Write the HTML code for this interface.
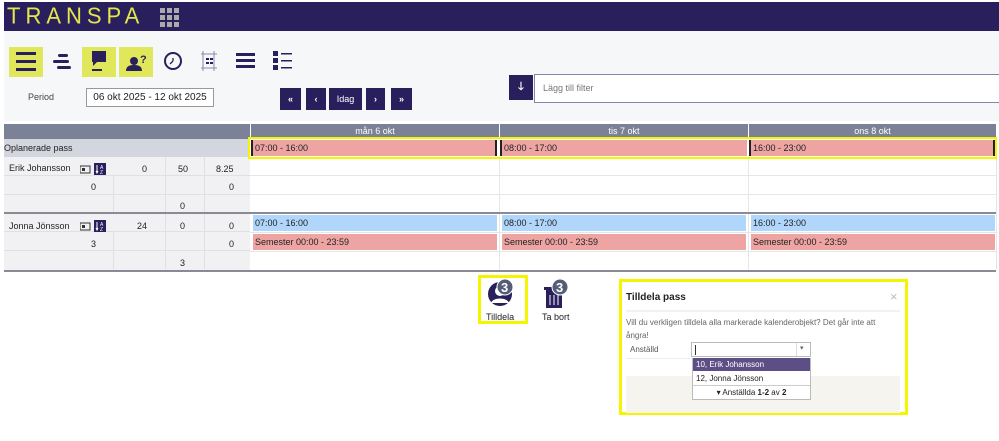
<!DOCTYPE html>
<html><head><meta charset="utf-8"><style>
*{box-sizing:border-box;margin:0;padding:0}
body{width:999px;height:441px;background:#fff;font-family:"Liberation Sans",sans-serif;font-size:9px;color:#222;position:relative;overflow:hidden}
.a{position:absolute}
.top{left:4px;top:2px;width:995px;height:29px;background:#291f5c}
.logo{left:7px;top:4px;color:#e3e84a;font-size:22px;letter-spacing:5px;line-height:24px;font-weight:normal;transform:scaleY(1.05)}
.tb{left:4px;top:31px;width:995px;height:90px;background:#f6f7f9}
.yb{background:#e1e75a}
.nav{background:#291f5c;color:#fff;font-size:9px;text-align:center;line-height:22px;height:22px;top:88px;font-weight:bold}
.hdr{background:#7b8196;color:#fff;text-align:center;line-height:15px;top:124px;height:15px}
.sh{height:16px;line-height:16px;padding-left:2px;font-size:9px;color:#222}
.red{background:#eda4a3}
.blue{background:#b1d6fb}
</style></head><body>
<div class="a top"></div>
<div class="a logo">TRANSPA</div>
<svg class="a" style="left:160px;top:8px" width="20" height="20"><g fill="#aaa"><rect x="0" y="0" width="5" height="5"/><rect x="7" y="0" width="5" height="5"/><rect x="14" y="0" width="5" height="5"/><rect x="0" y="7" width="5" height="5"/><rect x="7" y="7" width="5" height="5"/><rect x="14" y="7" width="5" height="5"/><rect x="0" y="14" width="5" height="5"/><rect x="7" y="14" width="5" height="5"/><rect x="14" y="14" width="5" height="5"/></g></svg>
<div class="a tb"></div>
<div class="a yb" style="left:9px;top:47px;width:34px;height:30px"></div>
<div class="a yb" style="left:82px;top:47px;width:34px;height:30px"></div>
<div class="a yb" style="left:119px;top:47px;width:34px;height:30px"></div>
<svg class="a" style="left:0;top:40px" width="300" height="45">
<g fill="#291f5c">
<rect x="16" y="12" width="20" height="3"/><rect x="16" y="20" width="20" height="3"/><rect x="16" y="28" width="20" height="3"/>
<rect x="58" y="14" width="10" height="3" rx="1.5"/><rect x="53" y="20" width="16" height="3" rx="1.5"/><rect x="57" y="26" width="14" height="3" rx="1.5"/>
<path d="M92 11h14v11h-9l-4 4v-4h-1z"/><rect x="92" y="29" width="10" height="2"/>
<circle cx="134" cy="21" r="4"/><path d="M126 31c0-5 4-6 8-6s8 1 8 6z"/><text x="140" y="23" font-size="11" font-weight="bold" font-family="Liberation Sans">?</text>
</g>
<circle cx="173" cy="21" r="8" fill="none" stroke="#291f5c" stroke-width="2"/><path d="M173 21l-3 3M173 21v-3" stroke="#291f5c" stroke-width="1.3"/>
<g stroke="#8a87b0" stroke-width="1" fill="none"><path d="M203 11v20M214 11v20M201 14h16M201 28h16"/></g>
<g fill="#291f5c"><rect x="206" y="18" width="3" height="2"/><rect x="210" y="18" width="3" height="2"/><rect x="206" y="22" width="3" height="2"/><rect x="210" y="22" width="3" height="2"/>
<rect x="236" y="13" width="19" height="3"/><rect x="236" y="19" width="19" height="3"/><rect x="236" y="25" width="19" height="3"/>
<rect x="273" y="11" width="5" height="5"/><rect x="273" y="18" width="5" height="5"/><rect x="273" y="25" width="5" height="5"/>
<rect x="281" y="13" width="11" height="1.5"/><rect x="281" y="20" width="11" height="1.5"/><rect x="281" y="27" width="11" height="1.5"/></g>
</svg>
<div class="a" style="left:28px;top:92px;color:#444">Period</div>
<div class="a" style="left:86px;top:88px;width:128px;height:19px;border:1px solid #999;background:#fff;text-align:center;line-height:17px;font-size:10px">06 okt 2025 - 12 okt 2025</div>
<div class="a nav" style="left:280px;width:21px">«</div>
<div class="a nav" style="left:306px;width:20px">‹</div>
<div class="a nav" style="left:329px;width:33px;font-weight:normal">Idag</div>
<div class="a nav" style="left:366px;width:19px">›</div>
<div class="a nav" style="left:391px;width:21px">»</div>
<div class="a" style="left:509px;top:75px;width:24px;height:25px;background:#291f5c;color:#fff;text-align:center;line-height:25px;font-size:11px;font-weight:bold">🡓</div>
<div class="a" style="left:534px;top:74px;width:470px;height:29px;border:1px solid #8a85a8;background:#fff;line-height:27px;padding-left:8px;color:#777;font-size:9px">Lägg till filter</div>

<div class="a hdr" style="left:4px;width:246px"></div>
<div class="a hdr" style="left:250px;width:249px;border-left:1px solid #fff">mån 6 okt</div>
<div class="a hdr" style="left:499px;width:249px;border-left:1px solid #fff">tis 7 okt</div>
<div class="a hdr" style="left:748px;width:248px;border-left:1px solid #fff">ons 8 okt</div>

<div class="a" style="left:4px;top:139px;width:246px;height:18px;background:#d3d6de;line-height:18px;font-size:9px">Oplanerade pass</div>
<div class="a" style="left:4px;top:157px;width:246px;height:56px;background:#f1f1f3"></div>
<div class="a" style="left:4px;top:213px;width:246px;height:58px;background:#f1f1f3"></div>
<svg class="a" style="left:4px;top:157px" width="246" height="114"><g stroke="#e0e0e0" stroke-width="1">
<path d="M0 18.5h246M0 37.5h246M109.5 18v37M161.5 0v55M200.5 0v55M0 74.5h246M0 93.5h246M109.5 74v38M161.5 56v56M200.5 56v56"/></g></svg>
<svg class="a" style="left:250px;top:157px" width="749" height="114"><g stroke="#e6e6e6"><path d="M0 18.5h746M0 37.5h746M0 75.5h746M0 94.5h746M249.5 0v113M498.5 0v113M746.5 0v113"/></g></svg>
<div class="a" style="left:4px;top:212px;width:992px;height:2px;background:#8a8a95"></div>
<div class="a" style="left:4px;top:270px;width:992px;height:2px;background:#8a8a95"></div>
<div class="a" style="left:9px;top:163px">Erik Johansson</div>
<div class="a" style="left:9px;top:221px">Jonna Jönsson</div>
<svg class="a" style="left:80px;top:163px" width="28" height="12"><rect x="0" y="3" width="10" height="7" fill="none" stroke="#333"/><rect x="2" y="5" width="3" height="3" fill="#333"/><rect x="14" y="0" width="12" height="12" fill="#291f5c"/><path d="M17 2v8M16 8l1 2 1-2" stroke="#fff" fill="none"/><text x="20" y="6" font-size="5" fill="#fff">A</text><text x="20" y="11" font-size="5" fill="#fff">Z</text></svg>
<svg class="a" style="left:80px;top:220px" width="28" height="12"><rect x="0" y="3" width="10" height="7" fill="none" stroke="#333"/><rect x="2" y="5" width="3" height="3" fill="#333"/><rect x="14" y="0" width="12" height="12" fill="#291f5c"/><path d="M17 2v8M16 8l1 2 1-2" stroke="#fff" fill="none"/><text x="20" y="6" font-size="5" fill="#fff">A</text><text x="20" y="11" font-size="5" fill="#fff">Z</text></svg>
<div class="a" style="left:142px;top:164px">0</div><div class="a" style="left:178px;top:164px">50</div><div class="a" style="left:216px;top:164px">8.25</div>
<div class="a" style="left:91px;top:182px">0</div><div class="a" style="left:229px;top:182px">0</div>
<div class="a" style="left:180px;top:201px">0</div>
<div class="a" style="left:137px;top:221px">24</div><div class="a" style="left:180px;top:221px">0</div><div class="a" style="left:229px;top:221px">0</div>
<div class="a" style="left:91px;top:239px">3</div><div class="a" style="left:229px;top:239px">0</div>
<div class="a" style="left:180px;top:258px">3</div>
<div class="a" style="left:248px;top:137px;width:749px;height:22px;border:2px solid #f5f500"></div>
<div class="a sh red" style="left:251px;top:140px;width:246px;border-left:2px solid #222;border-right:2px solid #222">07:00 - 16:00</div>
<div class="a sh red" style="left:500px;top:140px;width:247px;border-left:2px solid #222">08:00 - 17:00</div>
<div class="a sh red" style="left:749px;top:140px;width:246px;border-left:2px solid #222;border-right:2px solid #222">16:00 - 23:00</div>
<div class="a sh blue" style="left:253px;top:215px;width:244px">07:00 - 16:00</div>
<div class="a sh blue" style="left:502px;top:215px;width:244px">08:00 - 17:00</div>
<div class="a sh blue" style="left:751px;top:215px;width:244px">16:00 - 23:00</div>
<div class="a sh red" style="left:253px;top:234px;width:244px">Semester 00:00 - 23:59</div>
<div class="a sh red" style="left:502px;top:234px;width:244px">Semester 00:00 - 23:59</div>
<div class="a sh red" style="left:751px;top:234px;width:244px">Semester 00:00 - 23:59</div>

<div class="a" style="left:478px;top:275px;width:50px;height:49px;border:3px solid #f5f500"></div>
<svg class="a" style="left:485px;top:278px" width="100" height="34">
<circle cx="15" cy="16" r="12" fill="#291f5c"/><circle cx="15" cy="13" r="5" fill="#fff"/><path d="M6 25c2-6 16-6 18 0" fill="#fff"/>
<circle cx="20" cy="9" r="8" fill="#555c78" stroke="#fff"/><text x="16" y="14" font-size="13" font-weight="bold" fill="#fff" font-family="Liberation Sans">3</text>
<path d="M61 12h16v18h-16z" fill="#291f5c"/><rect x="59" y="9" width="20" height="3" fill="#291f5c"/><path d="M65 17v10M69 17v10M73 17v10" stroke="#fff"/>
<circle cx="75" cy="9" r="8" fill="#555c78" stroke="#fff"/><text x="71" y="14" font-size="13" font-weight="bold" fill="#fff" font-family="Liberation Sans">3</text>
</svg>
<div class="a" style="left:486px;top:312px;font-size:9px">Tilldela</div>
<div class="a" style="left:542px;top:312px;font-size:9px">Ta bort</div>

<div class="a" style="left:619px;top:279px;width:289px;height:136px;border:3px solid #f5f500;background:#fff"></div>
<div class="a" style="left:626px;top:292px;font-size:10px;font-weight:bold">Tilldela pass</div>
<div class="a" style="left:890px;top:289px;font-size:13px;color:#bbb">×</div>
<div class="a" style="left:626px;top:310px;width:274px;height:2px;background:#f2f2f0"></div>
<div class="a" style="left:626px;top:316px;width:270px;font-size:8px;color:#666;line-height:13px">Vill du verkligen tilldela alla markerade kalenderobjekt? Det går inte att ångra!</div>
<div class="a" style="left:630px;top:345px;font-size:8px;color:#555">Anställd</div>
<div class="a" style="left:626px;top:342px;width:68px;height:17px;border-bottom:1px solid #eee"></div>
<div class="a" style="left:626px;top:376px;width:274px;height:37px;background:#f5f4ef"></div>
<div class="a" style="left:691px;top:342px;width:120px;height:15px;border:1px solid #bbb;background:#fff"><div class="a" style="left:3px;top:2px;width:1px;height:10px;background:#333"></div><div class="a" style="left:104px;top:0;width:1px;height:13px;background:#ddd"></div><div class="a" style="left:108px;top:1px;font-size:7px;color:#666">▾</div></div>
<div class="a" style="left:692px;top:358px;width:119px;height:42px;border:1px solid #bbb;background:#fff"></div>
<div class="a" style="left:693px;top:358px;width:117px;height:13px;background:#5d4f86;color:#fff;font-size:8px;line-height:13px;padding-left:3px">10, Erik Johansson</div>
<div class="a" style="left:696px;top:374px;font-size:8px">12, Jonna Jönsson</div>
<div class="a" style="left:693px;top:385px;width:117px;border-top:1px solid #ccc;text-align:center;font-size:8px;line-height:14px">▾ Anställda <b>1-2</b> av <b>2</b></div>
</body></html>
